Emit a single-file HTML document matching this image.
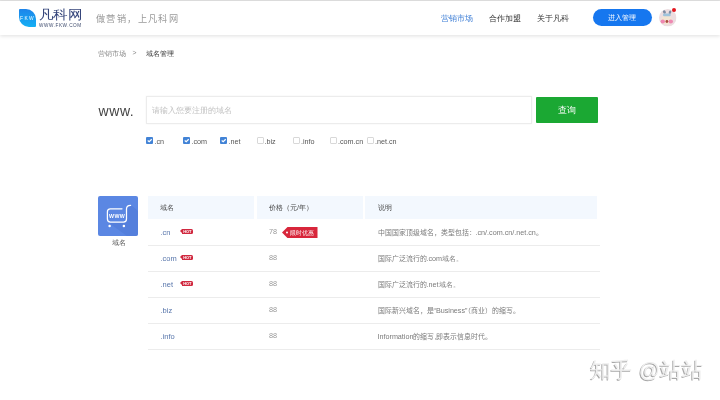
<!DOCTYPE html>
<html><head><meta charset="utf-8">
<style>
*{margin:0;padding:0;box-sizing:border-box}
html,body{width:720px;height:400px;overflow:hidden;background:#fff;font-family:"Liberation Sans",sans-serif}
.a{position:absolute;white-space:nowrap}
#top{position:absolute;left:0;top:0;width:720px;height:1px;background:#e2e2e2}
#hdr{position:absolute;left:0;top:1px;width:720px;height:34px;background:#fff;box-shadow:0 1px 4px rgba(0,0,0,0.13)}
#logo{left:18.5px;top:9px;width:17.5px;height:17.5px;border-radius:1px 10px 1px 10px;background:linear-gradient(180deg,#1d84ea,#15b0f4);color:#f4fbff;font-size:4.9px;text-align:left;padding-left:1.6px;line-height:19.4px;letter-spacing:1.3px}
#brand{left:38.8px;top:7px;font-size:12.5px;color:#34447a;letter-spacing:-0.2px;font-weight:300;transform:scaleX(1.12);transform-origin:0 0}
#brandsub{left:39px;top:22.5px;font-size:4.7px;color:#3f4c6e;letter-spacing:0.55px}
#slogan{left:96px;top:10.5px;font-family:"Liberation Serif",serif;font-size:9.2px;color:#9a9a9a;letter-spacing:1.4px;font-weight:300}
.nav{top:12.5px;font-size:7.8px;color:#333}
#btn{left:592.5px;top:8.75px;width:59.5px;height:17.6px;border-radius:9px;background:#1677ef;color:#fff;font-size:7px;text-align:center;line-height:17.6px}
#avatar{left:659px;top:9px;width:17.5px;height:17.5px}
#dot{left:671.8px;top:7.6px;width:4.4px;height:4.4px;border-radius:50%;background:#e3161e}
.bc{top:49px;font-size:6.8px;color:#888}
#www{left:98.5px;top:103px;font-size:14px;color:#444;letter-spacing:0.6px}
#inp{left:145.8px;top:96px;width:386px;height:27.8px;border:1px solid #ececec;box-shadow:0 0 2px rgba(0,0,0,0.05);background:#fff}
#ph{left:151.5px;top:105.6px;font-size:7.7px;color:#c0c0c0}
#go{left:536px;top:97px;width:61.75px;height:26px;background:#1ba833;border-radius:1px;color:#fff;font-size:9px;text-align:center;line-height:27px}
.cb{position:absolute;top:137px;width:7px;height:7px;border-radius:1px}
.cb svg{display:block}
.cb.on{background:#4283d6}
.cb.off{border:1px solid #d8d8d8;background:#fff}
.cbl{top:136.5px;font-size:7.2px;color:#555}
#icon{left:98px;top:196px;width:40px;height:39.5px;border-radius:2px;background:#5b87e3;overflow:hidden}
#iconlbl{left:111.5px;top:238px;font-size:7px;color:#555}
.th{position:absolute;top:195.7px;height:23.6px;background:#f3f8fe}
.tht{top:203px;font-size:7px;color:#474747}
.sep{position:absolute;left:147.5px;width:452px;height:1px;background:#ececec}
.dom{font-size:7.5px;color:#5876ab}
.pr{font-size:7.3px;color:#999}
.ds{font-size:6.9px;color:#7a7a7a}
.ds i{font-style:normal;font-size:7.2px}
.hot{position:absolute;width:10.7px;height:5.9px;background:#d0283f;border-radius:0 1.5px 1.5px 0;color:#fff;font-size:4px;font-weight:bold;line-height:6px;text-align:right;padding-right:1.6px;letter-spacing:-0.1px}
.hot:before{content:"";position:absolute;left:-2px;top:0;border-right:2px solid #d0283f;border-top:2.95px solid transparent;border-bottom:2.95px solid transparent}
#wm{left:590px;top:356px;font-size:21px;color:#eeeeee;text-shadow:-1px 1px 0.3px #a8a8a8;font-weight:500;letter-spacing:0.3px}
</style></head><body><div style="position:absolute;left:0;top:0;width:720px;height:400px;will-change:transform">
<div id="top"></div>
<div id="hdr"></div>
<div class="a" id="logo">FKW</div>
<div class="a" id="brand">凡科网</div>
<div class="a" id="brandsub">WWW.FKW.COM</div>
<div class="a" id="slogan" lang="zh-CN">做营销，上凡科网</div>
<div class="a nav" style="left:440.5px;color:#3f7fd6">营销市场</div>
<div class="a nav" style="left:489px">合作加盟</div>
<div class="a nav" style="left:537px">关于凡科</div>
<div class="a" id="btn">进入管理</div>
<svg class="a" id="avatar" viewBox="0 0 35 35">
  <defs><clipPath id="cc"><circle cx="17.5" cy="17.5" r="17.5"/></clipPath></defs>
  <g clip-path="url(#cc)">
  <rect width="35" height="35" fill="#ecdde0"/>
  <ellipse cx="15" cy="22" rx="11" ry="9" fill="#f2e4d2"/>
  <ellipse cx="10.8" cy="6" rx="2.8" ry="3.6" fill="#7e8ca3" transform="rotate(-25 10.8 6)"/>
  <ellipse cx="22" cy="6.5" rx="2.4" ry="3.8" fill="#7e8ca3" transform="rotate(20 22 6.5)"/>
  <rect x="8" y="9" width="15.5" height="5.5" rx="2.5" fill="#9fc3dc"/>
  <ellipse cx="7.5" cy="25" rx="4.5" ry="4" fill="#ef89b2"/>
  <ellipse cx="23.5" cy="25" rx="4.5" ry="4" fill="#ef89b2"/>
  <ellipse cx="15.8" cy="25" rx="2.8" ry="2.8" fill="#a84c3e"/>
  </g>
</svg>
<div class="a" id="dot"></div>

<div class="a bc" style="left:98px">营销市场</div>
<div class="a bc" style="left:132.5px">&gt;</div>
<div class="a bc" style="left:145.5px;color:#333">域名管理</div>

<div class="a" id="www">www.</div>
<div class="a" id="inp"></div>
<div class="a" id="ph">请输入您要注册的域名</div>
<div class="a" id="go">查询</div>

<div class="cb on" style="left:146px"><svg width="7" height="7" viewBox="0 0 7 7"><path d="M1.7 3.5 L3.2 4.7 L5.7 2.3" stroke="#fff" stroke-width="1.2" fill="none"/></svg></div>
<div class="a cbl" style="left:154.5px">.cn</div>
<div class="cb on" style="left:183px"><svg width="7" height="7" viewBox="0 0 7 7"><path d="M1.7 3.5 L3.2 4.7 L5.7 2.3" stroke="#fff" stroke-width="1.2" fill="none"/></svg></div>
<div class="a cbl" style="left:191.5px">.com</div>
<div class="cb on" style="left:220px"><svg width="7" height="7" viewBox="0 0 7 7"><path d="M1.7 3.5 L3.2 4.7 L5.7 2.3" stroke="#fff" stroke-width="1.2" fill="none"/></svg></div>
<div class="a cbl" style="left:228.5px">.net</div>
<div class="cb off" style="left:256.7px"></div>
<div class="a cbl" style="left:264.5px">.biz</div>
<div class="cb off" style="left:293px"></div>
<div class="a cbl" style="left:301px">.info</div>
<div class="cb off" style="left:330px"></div>
<div class="a cbl" style="left:338px">.com.cn</div>
<div class="cb off" style="left:367px"></div>
<div class="a cbl" style="left:375px">.net.cn</div>

<div class="a" id="icon">
<svg width="40" height="40" viewBox="0 0 40 40" style="display:block">
  <polygon points="28.5,12 33,9 40,15 40,40 29,40 11,27 28.5,26" fill="#4b75d2" opacity="0.45"/>
  <path d="M24 12.85 H12.4 Q9.4 12.85 9.4 15.85 V23.1 Q9.4 26.1 12.4 26.1 H25.5 Q28.5 26.1 28.5 23.1 V13 Q28.5 9.4 32.6 9.4" stroke="#fff" stroke-width="1.25" fill="none" stroke-linecap="round"/>
  <text x="19.1" y="22" font-family="Liberation Sans" font-weight="bold" font-size="5.3" fill="#fff" text-anchor="middle" letter-spacing="0.35">WWW</text>
  <circle cx="11.6" cy="29.9" r="1.25" fill="#fff"/>
  <circle cx="25.9" cy="29.9" r="1.25" fill="#fff"/>
</svg>
</div>
<div class="a" id="iconlbl">域名</div>

<div class="th" style="left:148.2px;width:106.3px"></div>
<div class="th" style="left:256.5px;width:106.7px"></div>
<div class="th" style="left:365.2px;width:232px"></div>
<div class="a tht" style="left:160px">域名</div>
<div class="a tht" style="left:269px">价格（元/年）</div>
<div class="a tht" style="left:377.5px">说明</div>

<div class="sep" style="top:245px"></div>
<div class="sep" style="top:271px"></div>
<div class="sep" style="top:297px"></div>
<div class="sep" style="top:323px"></div>
<div class="sep" style="top:349px"></div>

<div class="a dom" style="left:160.5px;top:228px">.cn</div>
<div class="hot" style="left:182.3px;top:228.6px">HOT</div>
<div class="a pr" style="left:269px;top:227px">78</div>
<div class="a" style="left:282px;top:227.2px;width:35.5px;height:11.1px">
<svg width="36" height="11.1" viewBox="0 0 36 11.1" style="position:absolute;left:0;top:0"><path d="M0 5.55 L5.5 0 H35.5 V11.1 H5.5 Z" fill="#d8263b"/><circle cx="5" cy="5.6" r="1" fill="#fff"/></svg>
<div class="a" style="left:8px;top:1.6px;font-size:6.2px;color:#fff;font-weight:500">限时优惠</div>
</div>
<div lang="zh-CN" class="a ds" style="left:377.5px;top:227px">中国国家顶级域名，类型包括：<i>.cn/.com.cn/.net.cn</i>。</div>

<div class="a dom" style="left:160.5px;top:254px">.com</div>
<div class="hot" style="left:182.3px;top:254.6px">HOT</div>
<div class="a pr" style="left:269px;top:253px">88</div>
<div lang="zh-CN" class="a ds" style="left:377.5px;top:253px">国际广泛流行的<i>.com</i>域名。</div>

<div class="a dom" style="left:160.5px;top:280px">.net</div>
<div class="hot" style="left:182.3px;top:280.6px">HOT</div>
<div class="a pr" style="left:269px;top:279px">88</div>
<div lang="zh-CN" class="a ds" style="left:377.5px;top:279px">国际广泛流行的<i>.net</i>域名。</div>

<div class="a dom" style="left:160.5px;top:306px">.biz</div>
<div class="a pr" style="left:269px;top:305px">88</div>
<div lang="zh-CN" class="a ds" style="left:377.5px;top:305px">国际新兴域名，是<i>&#8220;Business&#8221;</i>（商业）的缩写。</div>

<div class="a dom" style="left:160.5px;top:332px">.info</div>
<div class="a pr" style="left:269px;top:331px">88</div>
<div lang="zh-CN" class="a ds" style="left:377.5px;top:331px"><i>Information</i>的缩写,即表示信息时代。</div>

<div class="a" id="wm">知乎 @站站</div>
</div></body></html>
